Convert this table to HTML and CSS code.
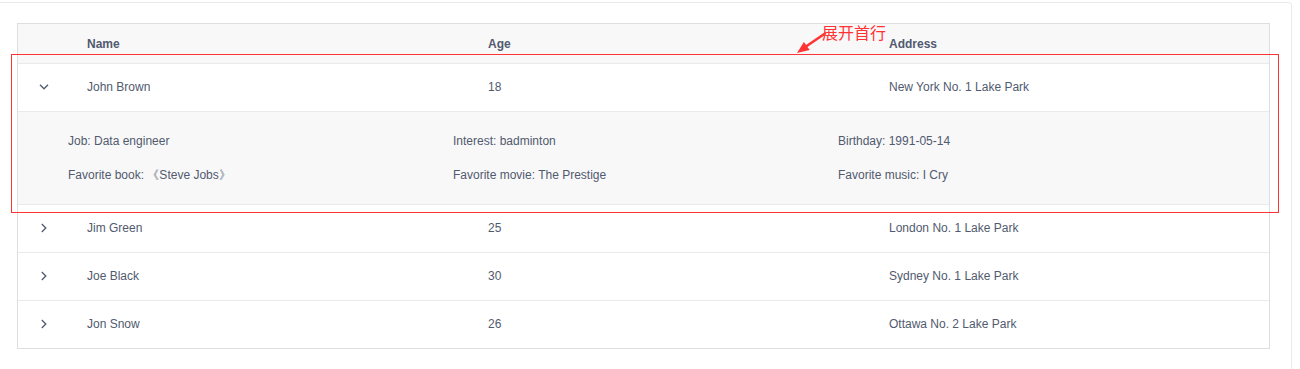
FILE: index.html
```html
<!DOCTYPE html>
<html>
<head>
<meta charset="utf-8">
<link rel="stylesheet" href="styles.css">
</head>
<body>
<div class="card">
  <div class="table">
    <div class="row head">
      <div class="cell"></div>
      <div class="cell">Name</div>
      <div class="cell">Age</div>
      <div class="cell">Address</div>
    </div>
    <div class="row">
      <div class="cell icon"><svg width="10" height="6" viewBox="0 0 10 6"><path d="M1 0.8 L5 4.8 L9 0.8" fill="none" stroke="#515a6e" stroke-width="1.3"/></svg></div>
      <div class="cell">John Brown</div>
      <div class="cell">18</div>
      <div class="cell">New York No. 1 Lake Park</div>
    </div>
    <div class="expanded">
      <div class="exp-row">
        <div class="exp-col">Job: Data engineer</div>
        <div class="exp-col">Interest: badminton</div>
        <div class="exp-col">Birthday: 1991-05-14</div>
      </div>
      <div class="exp-row">
        <div class="exp-col">Favorite book: 《Steve Jobs》</div>
        <div class="exp-col">Favorite movie: The Prestige</div>
        <div class="exp-col">Favorite music: I Cry</div>
      </div>
    </div>
    <div class="row">
      <div class="cell icon"><svg width="6" height="10" viewBox="0 0 6 10"><path d="M0.8 1 L4.8 5 L0.8 9" fill="none" stroke="#515a6e" stroke-width="1.3"/></svg></div>
      <div class="cell">Jim Green</div>
      <div class="cell">25</div>
      <div class="cell">London No. 1 Lake Park</div>
    </div>
    <div class="row">
      <div class="cell icon"><svg width="6" height="10" viewBox="0 0 6 10"><path d="M0.8 1 L4.8 5 L0.8 9" fill="none" stroke="#515a6e" stroke-width="1.3"/></svg></div>
      <div class="cell">Joe Black</div>
      <div class="cell">30</div>
      <div class="cell">Sydney No. 1 Lake Park</div>
    </div>
    <div class="row last">
      <div class="cell icon"><svg width="6" height="10" viewBox="0 0 6 10"><path d="M0.8 1 L4.8 5 L0.8 9" fill="none" stroke="#515a6e" stroke-width="1.3"/></svg></div>
      <div class="cell">Jon Snow</div>
      <div class="cell">26</div>
      <div class="cell">Ottawa No. 2 Lake Park</div>
    </div>
  </div>
</div>
<div class="note-box"></div>
<div class="note-text">展开首行</div>
<svg class="note-arrow" width="40" height="32" viewBox="0 0 40 32">
  <line x1="16" y1="21.5" x2="35" y2="8.5" stroke="#f33" stroke-width="2.6" stroke-linecap="round"/>
  <polygon points="7,28 13.9,16.9 19.7,25.1" fill="#f33"/>
</svg>
</body>
</html>
```
FILE: styles.css
```css
html, body {
  margin: 0;
  padding: 0;
  background: #fff;
  font-family: "Liberation Sans", Arial, sans-serif;
  font-size: 12px;
  color: #515a6e;
  overflow: hidden;
}
.card {
  box-sizing: border-box;
  margin: 2px 8px 0 -10px;
  border: 1px solid #e8eaec;
  border-bottom: none;
  border-radius: 4px 4px 0 0;
  padding: 20px 21px 0 26px;
  height: 367px;
}
.table {
  border: 1px solid #dcdee2;
  border-bottom: none;
}
.row {
  display: grid;
  grid-template-columns: 51px 401px 401px 1fr;
  height: 47px;
  border-bottom: 1px solid #e8eaec;
  background: #fff;
}
.row.last {
  border-bottom: 1px solid #dcdee2;
}
.row.head {
  height: 39px;
  background: #f8f8f9;
  font-weight: bold;
}
.cell {
  display: flex;
  align-items: center;
  padding: 0 18px 2px;
  white-space: nowrap;
}
.row.head .cell {
  padding-bottom: 0;
}
.cell.icon {
  padding: 0 0 2px;
  justify-content: center;
}
.expanded {
  background: #f8f8f9;
  padding: 20px 50px;
  border-bottom: 1px solid #e8eaec;
  display: flex;
  flex-direction: column;
  gap: 16px;
}
.exp-row {
  display: grid;
  grid-template-columns: 385px 385px 1fr;
  line-height: 18px;
}
.note-box {
  position: absolute;
  left: 11px;
  top: 54px;
  width: 1266px;
  height: 157px;
  border: 1px solid #f33;
}
.note-text {
  position: absolute;
  left: 822px;
  top: 22px;
  font-family: "Noto Sans CJK SC", sans-serif;
  font-size: 16px;
  line-height: 20px;
  color: #f33;
}
.note-arrow {
  position: absolute;
  left: 790px;
  top: 25px;
}
```
